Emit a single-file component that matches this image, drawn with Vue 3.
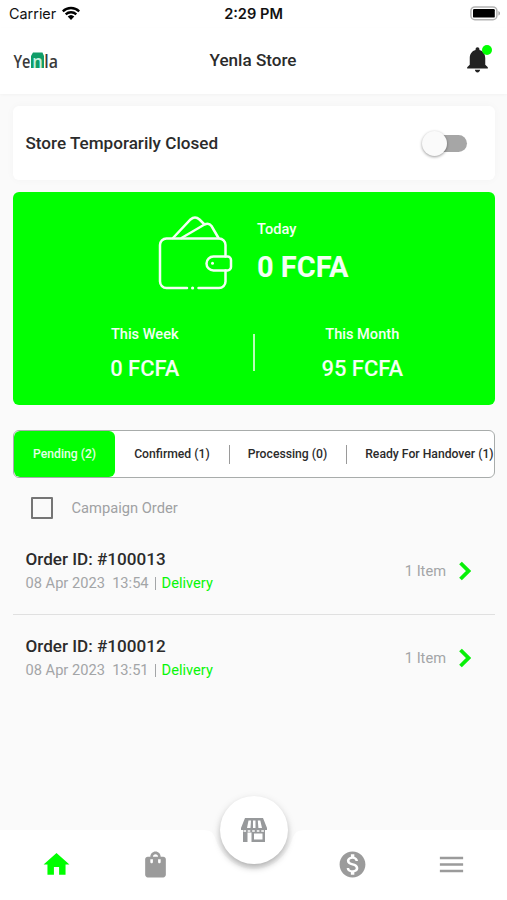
<template>
  <div class="screen">
    <div class="status">
      <div class="carrier">
        <span>Carrier</span>
        <svg width="20" height="15" viewBox="0 0 20 15">
          <path d="M1.8 5.3a11.8 11.8 0 0 1 16.4 0M4.7 8.4a7.6 7.6 0 0 1 10.6 0" fill="none" stroke="#000" stroke-width="2.3" />
          <path d="M6.7 10.6a4.8 4.8 0 0 1 6.6 0L10 14z" />
        </svg>
      </div>
      <span class="clock">2:29 PM</span>
      <svg class="battery" width="31" height="15" viewBox="0 0 31 15">
        <rect x="0.9" y="0.9" width="26" height="12.8" rx="4" fill="#fff" stroke="#b3b3b3" stroke-width="1.5" />
        <rect x="3" y="3" width="21.8" height="8.6" rx="1.2" />
        <path d="M28.4 5v4.6c2.2-.8 2.2-3.8 0-4.6z" fill="#a6a6a6" />
      </svg>
    </div>

    <header class="header">
      <svg class="logo" width="46" height="24" viewBox="0 0 46 24">
        <path d="M20 2.5h9.5L31 6v12H18V6z" fill="#0f9d68" />
        <text x="0.5" y="18" textLength="17" lengthAdjust="spacingAndGlyphs" fill="#3a3a3a">Ye</text>
        <text x="19.3" y="18" textLength="10.5" lengthAdjust="spacingAndGlyphs" fill="#c4f0dc">n</text>
        <text x="31.3" y="18" textLength="13.7" lengthAdjust="spacingAndGlyphs" fill="#3a3a3a">la</text>
      </svg>
      <h1>Yenla Store</h1>
      <div class="bell">
        <svg width="31" height="31" viewBox="0 0 24 24">
          <path d="M12 22c1.1 0 2-.9 2-2h-4c0 1.1.9 2 2 2zm6-6v-5c0-3.07-1.64-5.64-4.5-6.32V4c0-.83-.67-1.5-1.5-1.5s-1.5.67-1.5 1.5v.68C7.63 5.36 6 7.92 6 11v5l-2 2v1h16v-1l-2-2z" fill="#222" />
        </svg>
        <i></i>
      </div>
    </header>

    <main>
      <section class="closed">
        <span>Store Temporarily Closed</span>
        <button class="switch" :class="{ on: open }" @click="open = !open"><i></i></button>
      </section>

      <section class="earnings">
        <div class="today">
          <svg width="80" height="80" viewBox="155 212 80 80" fill="none" stroke="#f4fff4" stroke-width="2.5" stroke-linecap="round">
            <path d="M187 288h-20.500a6.500 6.500 0 0 1-6.500-6.500V245a6.500 6.500 0 0 1 6.500-6.500H219a6.500 6.500 0 0 1 6.500 6.500v11.500M225.500 270.500v11a6.500 6.500 0 0 1-6.500 6.500h-20.500" />
            <path d="M213.500 256.500h14a3.500 3.500 0 0 1 3.500 3.500v7a3.500 3.500 0 0 1-3.500 3.500h-14a7 7 0 0 1 0-14z" />
            <path d="M173 238l17.500-18.500q4.500-4 9 0l4.500 4.500M181.500 238l23-13.500q4.500-2 7 1.500l7 12" />
            <circle cx="212.500" cy="263.300" r="1.500" fill="#f4fff4" stroke="none" />
            <circle cx="192.600" cy="288" r="1.600" fill="#f4fff4" stroke="none" />
          </svg>
          <div>
            <p>Today</p>
            <strong>0 FCFA</strong>
          </div>
        </div>
        <div class="totals">
          <div>
            <p>This Week</p>
            <strong>0 FCFA</strong>
          </div>
          <i></i>
          <div>
            <p>This Month</p>
            <strong>95 FCFA</strong>
          </div>
        </div>
      </section>

      <nav class="tabs">
        <button
          v-for="(tab, i) in tabs"
          :key="tab"
          :class="{ active: i === current }"
          @click="current = i"
        >{{ tab }}</button>
      </nav>

      <label class="campaign">
        <i></i>
        <span>Campaign Order</span>
      </label>

      <article v-for="order in orders" :key="order.id" class="order">
        <div>
          <h2>Order ID: #{{ order.id }}</h2>
          <p>{{ order.date }}&nbsp; {{ order.time }}<b></b><span>Delivery</span></p>
        </div>
        <div class="items">
          <span>1 Item</span>
          <svg width="12" height="20" viewBox="0 0 12 20">
            <path d="M1.500 2l8 8-8 8" fill="none" stroke="#08f008" stroke-width="3.800" />
          </svg>
        </div>
      </article>
    </main>

    <footer class="bottom">
      <svg class="notch" width="507" height="70" viewBox="0 0 507 70">
        <path d="M0 0H203C212 0 214 4 216 10C222 27 236 39 254 39S286 27 292 10C294 4 296 0 305 0H507V70H0z" fill="#fff" />
      </svg>
      <div class="links">
        <svg v-for="icon in icons" :key="icon.name" width="31" height="31" viewBox="0 0 24 24">
          <path :d="icon.path" :fill="icon.name === 'home' ? '#00ff00' : '#9b9b9b'" />
        </svg>
      </div>
      <button class="store">
        <svg width="26" height="24" viewBox="0 0 26 24" fill="#97999b">
          <path d="M4 0h18l4 10v2H0v-2z" />
          <path d="M7.500 2.500L6 10h3.500l.5-7.500zM12 2.500h2.500v7.500H12zM16.800 2.500l.6 7.500H21l-1.700-7.500z" fill="#fff" />
          <path d="M2 12h22v2.500H2z" />
          <path d="M2.500 12.300h2.600v1.500H2.500zM6.700 12.300h2.600v1.500H6.700zM11.200 12.300h2.600v1.500h-2.600zM15.800 12.300h2.600v1.500h-2.600zM20.300 12.300h2.600v1.500h-2.600z" fill="#fff" />
          <path d="M2 14h4.500v10H2zM10.500 14H24v10H10.500zM13 15.500v6h8.500v-6z" fill-rule="evenodd" />
        </svg>
      </button>
    </footer>
  </div>
</template>

<script setup>
import { ref } from 'vue';

const open = ref(false);
const current = ref(0);

const tabs = ['Pending (2)', 'Confirmed (1)', 'Processing (0)', 'Ready For Handover (1)'];

const orders = [
  { id: 100013, date: '08 Apr 2023', time: '13:54' },
  { id: 100012, date: '08 Apr 2023', time: '13:51' },
];

const icons = [
  { name: 'home', path: 'M10 20v-6h4v6h5v-8h3L12 3 2 12h3v8z' },
  { name: 'orders', path: 'M18 6h-2c0-2.210-1.790-4-4-4S8 3.790 8 6H6c-1.100 0-2 .9-2 2v12c0 1.100.9 2 2 2h12c1.100 0 2-.9 2-2V8c0-1.100-.9-2-2-2zm-8 4c0 .55-.45 1-1 1s-1-.45-1-1V8h2v2zm2-6c1.100 0 2 .9 2 2h-4c0-1.100.9-2 2-2zm4 6c0 .55-.45 1-1 1s-1-.45-1-1V8h2v2z' },
  { name: 'gap', path: '' },
  { name: 'wallet', path: 'M12 2C6.480 2 2 6.480 2 12s4.480 10 10 10 10-4.480 10-10S17.520 2 12 2zm1.410 16.090V20h-2.670v-1.930c-1.710-.36-3.160-1.460-3.270-3.400h1.960c.1 1.050.82 1.870 2.650 1.870 1.960 0 2.400-.98 2.400-1.590 0-.83-.44-1.610-2.670-2.140-2.480-.6-4.180-1.620-4.180-3.670 0-1.720 1.390-2.840 3.110-3.210V4h2.670v1.950c1.860.45 2.790 1.860 2.850 3.390H14.300c-.05-1.110-.64-1.870-2.220-1.870-1.500 0-2.400.68-2.400 1.640 0 .84.65 1.390 2.670 1.910s4.180 1.390 4.180 3.910c-.01 1.830-1.380 2.830-3.120 3.160z' },
  { name: 'menu', path: 'M3 18h18v-2H3v2zm0-5h18v-2H3v2zm0-7v2h18V6H3z' },
];
</script>

<style>
body {
  margin: 0;
}
</style>

<style scoped>
.screen {
  width: 507px;
  height: 900px;
  display: flex;
  flex-direction: column;
  background: #fafafa;
  font-family: Roboto, sans-serif;
  color: #2b2b2b;
  overflow: hidden;
}

button {
  border: 0;
  padding: 0;
  font-family: inherit;
}

p,
h1,
h2 {
  margin: 0;
}

.status {
  height: 28px;
  box-sizing: border-box;
  padding: 0 6px 1px 9px;
  display: grid;
  grid-template-columns: 1fr auto 1fr;
  align-items: center;
  background: #fff;
  font-family: Inter, sans-serif;
  color: #111;
}

.carrier {
  display: flex;
  align-items: center;
  gap: 5px;
  font-size: 14.4px;
}

.clock {
  margin-right: 3px;
  font-size: 14.6px;
  font-weight: 600;
}

.battery {
  justify-self: end;
}

.header {
  height: 66px;
  box-sizing: border-box;
  padding: 0 14px 2px 13px;
  display: grid;
  grid-template-columns: 1fr auto 1fr;
  align-items: center;
  background: #fff;
  box-shadow: 0 1px 3px rgba(0, 0, 0, 0.03);
}

.logo {
  margin-top: 3px;
  font-family: "Open Sans", sans-serif;
  font-size: 18px;
  font-weight: 600;
}

h1 {
  font-size: 17.1px;
  font-weight: 500;
  line-height: 24px;
}

.bell {
  position: relative;
  justify-self: end;
  height: 32px;
}

.bell i {
  position: absolute;
  right: 1px;
  top: 1px;
  width: 10px;
  height: 10px;
  border-radius: 50%;
  background: #00ff00;
}

main {
  padding: 12px 12px 0 13px;
}

.closed {
  height: 74px;
  box-sizing: border-box;
  padding: 0 28px 0 12.5px;
  display: flex;
  align-items: center;
  justify-content: space-between;
  background: #fff;
  border-radius: 6px;
  box-shadow: 0 0 8px rgba(0, 0, 0, 0.03);
  font-size: 17.1px;
  font-weight: 500;
}

.switch {
  width: 45px;
  height: 25px;
  background: none;
  position: relative;
}

.switch::before {
  content: "";
  position: absolute;
  left: 5px;
  top: 4px;
  width: 40px;
  height: 17px;
  border-radius: 9px;
  background: #a6a6a6;
}

.switch i {
  position: absolute;
  left: 0;
  top: 0;
  width: 25px;
  height: 25px;
  border-radius: 50%;
  background: #fafafa;
  box-shadow: 0 1px 3px rgba(0, 0, 0, 0.4);
}

.switch.on i {
  left: 20px;
}

.earnings {
  height: 213px;
  box-sizing: border-box;
  margin-top: 12px;
  padding-top: 20px;
  background: #00ff00;
  border-radius: 6px;
  color: #f4fff4;
}

.today {
  display: flex;
  padding-left: 142px;
  gap: 22px;
}

.today p {
  margin-top: 7px;
  line-height: 20px;
}

.today strong {
  display: block;
  margin-top: 10px;
  font-size: 29px;
  font-weight: 700;
  line-height: 36px;
}

.earnings p {
  font-size: 14.6px;
  font-weight: 500;
}

.totals {
  display: flex;
  align-items: center;
  margin-top: 31px;
  padding: 0 25px 0 24px;
  text-align: center;
}

.totals div {
  flex: 1;
}

.totals p {
  line-height: 22px;
}

.totals strong {
  display: block;
  margin-top: 11px;
  font-size: 22px;
  font-weight: 500;
  line-height: 26px;
}

.totals i {
  width: 2px;
  height: 37px;
  background: #b8ffb8;
}

.tabs {
  height: 48px;
  box-sizing: border-box;
  margin-top: 25px;
  border: 1px solid #a8acab;
  border-radius: 6px;
  background: #fff;
  display: flex;
  overflow: hidden;
}

.tabs button {
  flex: none;
  padding: 0 19px 1px;
  background: none;
  color: #2b2b2b;
  font-size: 12.2px;
  font-weight: 500;
  white-space: nowrap;
  position: relative;
}

.tabs button.active {
  background: #00ff00;
  border-radius: 6px;
  color: #e4ffe4;
}

.tabs button:last-child {
  padding-right: 0;
}

.tabs button + button + button::before {
  content: "";
  position: absolute;
  left: 0;
  top: 14px;
  width: 1px;
  height: 19px;
  background: #9a9a9a;
}

.campaign {
  height: 59px;
  padding: 18px 0 0 18px;
  box-sizing: border-box;
  display: flex;
  align-items: flex-start;
  gap: 18.5px;
  color: #9fa1a3;
  font-size: 14.7px;
  line-height: 24px;
}

.campaign i {
  width: 18px;
  height: 18px;
  margin-top: 1px;
  border: 2px solid #757575;
  border-radius: 1px;
}

.order {
  height: 77px;
  box-sizing: border-box;
  padding: 11px 24px 0 12.5px;
  display: flex;
  justify-content: space-between;
}

.order + .order {
  height: 86px;
  border-top: 1px solid #e0e0e0;
  padding-top: 20px;
}

h2 {
  font-size: 17.1px;
  font-weight: 500;
  line-height: 23px;
}

.order p {
  font-size: 14.65px;
  line-height: 25px;
  color: #a3a5a7;
}

.order b {
  display: inline-block;
  width: 1px;
  height: 13px;
  margin: 0 6px;
  vertical-align: -2px;
  background: #a3a5a7;
}

.order p span {
  color: #08f608;
}

.items {
  height: 46px;
  display: flex;
  align-items: center;
  gap: 13px;
  color: #a3a5a7;
  font-size: 14.65px;
}

.bottom {
  height: 70px;
  margin-top: auto;
  position: relative;
}

.notch {
  position: absolute;
  left: 0;
  top: 0;
}

.links {
  position: relative;
  height: 70px;
  box-sizing: border-box;
  padding: 0 6px 1px 7px;
  display: flex;
  justify-content: space-around;
  align-items: center;
}

.store {
  position: absolute;
  left: 220px;
  top: -34px;
  width: 68px;
  height: 68px;
  display: flex;
  align-items: center;
  justify-content: center;
  background: #fff;
  border-radius: 50%;
  box-shadow: 0 4px 6px -1px rgba(0, 0, 0, 0.2), 0 3px 9px rgba(0, 0, 0, 0.15);
}
</style>
